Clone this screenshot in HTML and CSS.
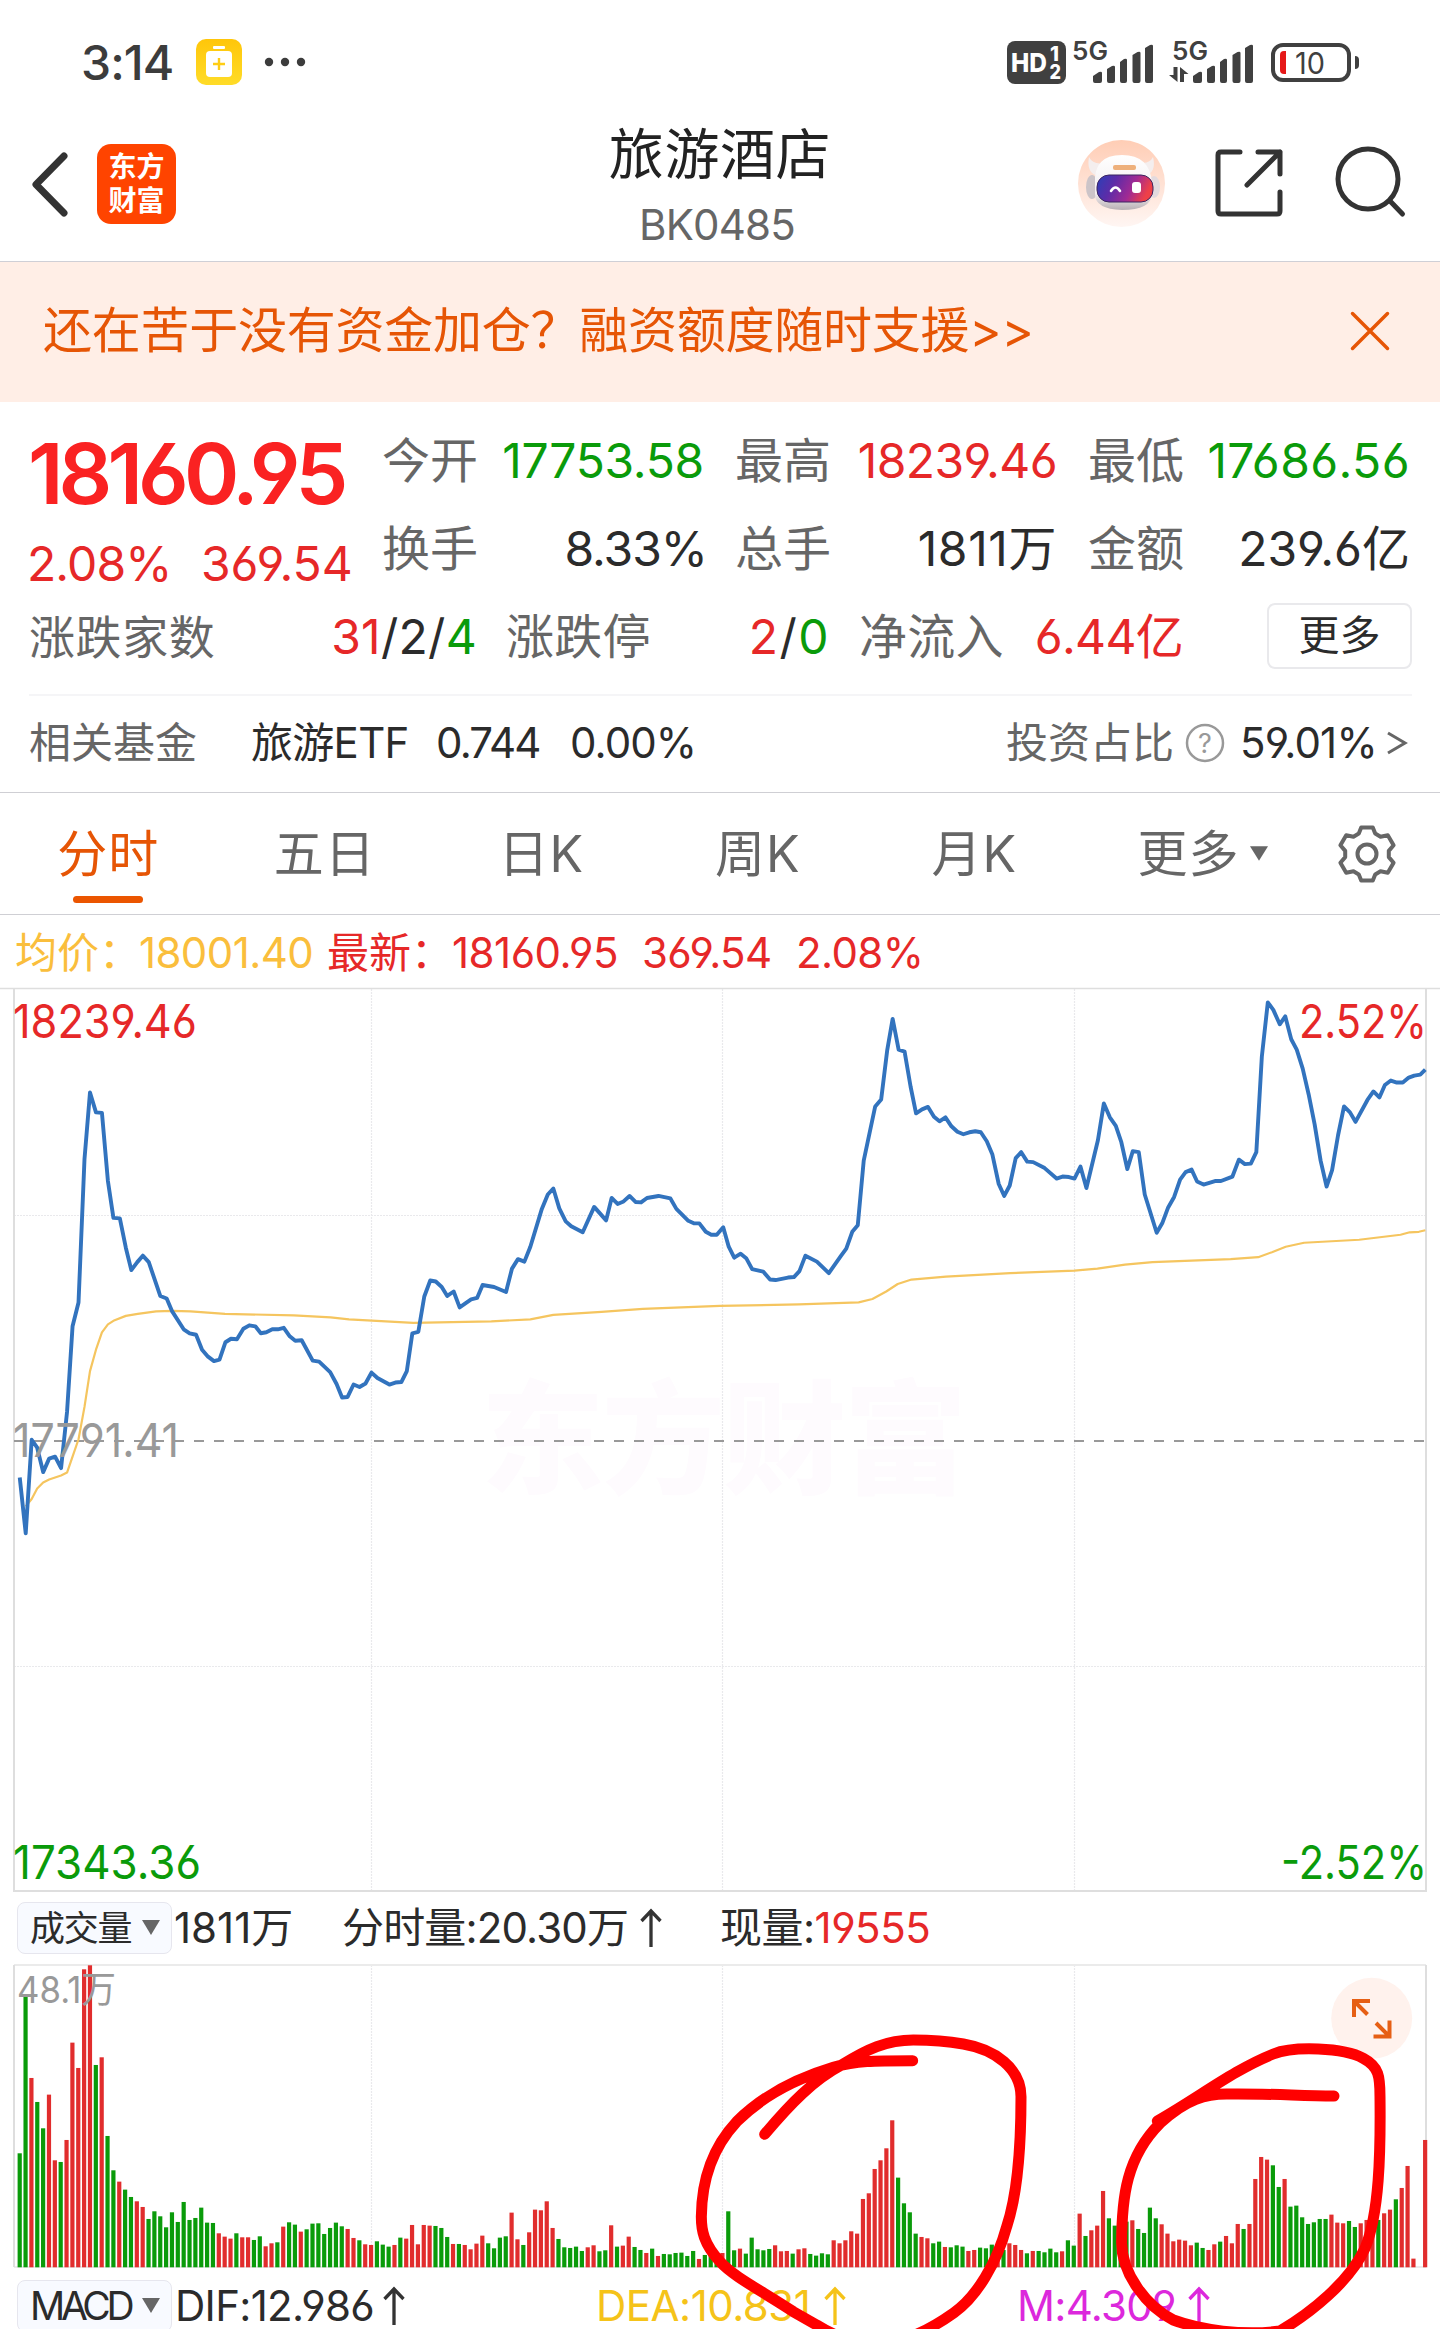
FILE: index.html
```html
<!DOCTYPE html>
<html lang="zh-CN">
<head>
<meta charset="utf-8">
<title>旅游酒店 BK0485</title>
<link rel="stylesheet" href="styles.css">
</head>
<body>
<header class="status">
  <span class="clock">3:14</span>
  <svg class="saver" width="46" height="46" viewBox="0 0 46 46"><defs><linearGradient id="sv" x2="0" y2="1"><stop offset="0" stop-color="#ffc60a"/><stop offset="1" stop-color="#ffdc28"/></linearGradient></defs><rect width="46" height="46" rx="10" fill="url(#sv)"/><rect x="17" y="7" width="12" height="3" rx="1" fill="#fff"/><rect x="10" y="12" width="26" height="26" rx="4" fill="#fff"/><path d="M23 19v12M17 25h12" stroke="#ffcd14" stroke-width="2.4"/></svg>
  <svg class="dots" width="44" height="10" viewBox="0 0 44 10" fill="#3c3c3c"><circle cx="5" cy="5" r="4.2"/><circle cx="21" cy="5" r="4.2"/><circle cx="37" cy="5" r="4.2"/></svg>
  <svg class="signals" width="356" height="46" viewBox="1006 38 356 46" fill="#404040">
    <rect x="1007" y="40" width="59" height="43" rx="8"/>
    <g fill="#fff" class="hd"><text x="1011" y="71" font-size="26" textLength="36" lengthAdjust="spacingAndGlyphs">HD</text><text x="1050" y="60" font-size="20" textLength="9" lengthAdjust="spacingAndGlyphs">1</text><text x="1049.500" y="78" font-size="20" textLength="11.500" lengthAdjust="spacingAndGlyphs">2</text></g>
    <text class="net" x="1072" y="59" textLength="36" lengthAdjust="spacingAndGlyphs">5G</text>
    <text class="net" x="1172" y="59" textLength="36" lengthAdjust="spacingAndGlyphs">5G</text>
    <g id="bars"><path d="M1093 75l6-4q3-1 3 1v8q0 2-2 2h-5q-2 0-2-2zM1107 68l5-3q3-1 3 1v14q0 2-2 2h-4q-2 0-2-2zM1120 61l4-3q3-1 3 1v21q0 2-2 2h-3q-2 0-2-2zM1132.500 54l5-3q3-1 3 1v28q0 2-2 2h-4q-2 0-2-2zM1145 47l5-3q3-1 3 1v35q0 2-2 2h-4q-2 0-2-2z"/></g>
    <use href="#bars" x="100"/>
    <path d="M1173.500 66h4v15l-8.500-7h4.500zM1180 81h4v-8h4.500l-8.500-7z"/>
    <rect x="1273" y="44" width="76" height="35" rx="10" fill="none" stroke="#404040" stroke-width="4"/>
    <path d="M1355 55q4 0 4 4v5q0 4-4 4z"/>
    <path d="M1286 50v23h-2q-4 0-4-4v-15q0-4 4-4z" fill="#e61919"/>
    <text x="1295" y="73" font-size="30" textLength="30" lengthAdjust="spacingAndGlyphs">10</text>
  </svg>
</header>

<nav class="nav">
  <div class="nav-left">
    <svg width="38" height="66" viewBox="0 0 38 66" fill="none" stroke="#333" stroke-width="7" stroke-linecap="round" stroke-linejoin="round"><path d="M33 5L5 33.500L33 62"/></svg>
    <div class="logo"><span>东方</span><span>财富</span></div>
  </div>
  <div class="nav-title"><h1>旅游酒店</h1><p>BK0485</p></div>
  <div class="nav-right">
    <svg class="avatar" width="87" height="87" viewBox="0 0 87 87">
      <defs>
        <linearGradient id="av" x2="0" y2="1"><stop offset="0" stop-color="#ffcdb5"/><stop offset="1" stop-color="#fff6f3"/></linearGradient>
        <linearGradient id="vz" y2=".25"><stop offset="0" stop-color="#2a40b8"/><stop offset=".35" stop-color="#5c2ca8"/><stop offset=".7" stop-color="#a02a94"/><stop offset="1" stop-color="#ee4048"/></linearGradient>
        <linearGradient id="hl" x2="0" y2="1"><stop offset="0" stop-color="#fff"/><stop offset=".7" stop-color="#f3eef0"/><stop offset="1" stop-color="#b8b0b4"/></linearGradient>
      </defs>
      <circle cx="43.500" cy="43.500" r="43.500" fill="url(#av)"/>
      <path d="M20 36Q8 33 11 17Q15 25 26 23zM66 36Q79 33 75 17Q71 25 60 22z" fill="#f4eeee"/>
      <ellipse cx="14" cy="47" rx="6" ry="12" fill="#ccc4c8"/><ellipse cx="76" cy="47" rx="6" ry="11" fill="#e2dade"/>
      <path d="M17 44Q15 15 44 15Q72 15 74 43L74 54Q73 70 44 70Q17 69 17 54z" fill="url(#hl)"/>
      <rect x="19" y="35" width="56" height="27" rx="12" fill="url(#vz)" stroke="#3b2460" stroke-width="1"/>
      <rect x="35" y="25" width="23" height="5" rx="2" fill="#eeb07c"/>
      <path d="M33 51q4.500-7 9 0" fill="none" stroke="#fff" stroke-width="2.600" stroke-linecap="round"/>
      <rect x="54" y="42" width="9" height="11" rx="3" fill="#fff"/>
    </svg>
    <svg class="share" width="68" height="68" viewBox="0 0 68 68" fill="none" stroke="#333" stroke-width="5" stroke-linecap="round" stroke-linejoin="round"><path d="M25 3H6Q3 3 3 6V62Q3 65 6 65H62Q65 65 65 62V43M43 3H65V25M65 3L32 36"/></svg>
    <svg class="search" width="72" height="72" viewBox="0 0 72 72" fill="none" stroke="#333" stroke-width="5" stroke-linecap="round"><circle cx="33" cy="32" r="30"/><path d="M55 54L67.500 67"/></svg>
  </div>
</nav>

<div class="banner">
  <span>还在苦于没有资金加仓？融资额度随时支援&gt;&gt;</span>
  <svg width="40" height="40" viewBox="0 0 40 40" stroke="#e65505" stroke-width="3.500" stroke-linecap="round"><path d="M2.500 2.500L37.500 37.500M37.500 2.500L2.500 37.500"/></svg>
</div>

<section class="quote">
  <div class="quote-top">
    <div class="price">
      <strong>18160.95</strong>
      <p><span class="pct">2.08%</span><span class="chg">369.54</span></p>
    </div>
    <dl class="stats">
      <div><dt>今开</dt><dd class="down v1">17753.58</dd></div>
      <div><dt>最高</dt><dd class="up v2">18239.46</dd></div>
      <div><dt>最低</dt><dd class="down v6">17686.56</dd></div>
      <div><dt>换手</dt><dd class="v3">8.33%</dd></div>
      <div><dt>总手</dt><dd class="v4">1811万</dd></div>
      <div><dt>金额</dt><dd>239.6亿</dd></div>
    </dl>
  </div>
  <dl class="quote-more">
    <div class="breadth"><dt class="tight">涨跌家数</dt><dd class="v5"><span class="up">31</span>/2/<span class="down">4</span></dd></div>
    <div><dt class="loose">涨跌停</dt><dd class="v7"><span class="up">2</span>/<span class="down">0</span></dd></div>
    <div><dt class="loose">净流入</dt><dd class="up v8">6.44亿</dd></div>
    <button class="more">更多</button>
  </dl>
  <div class="fund">
    <span class="muted">相关基金</span>
    <span class="f1">旅游ETF</span><span class="f2">0.744</span><span class="f3">0.00%</span>
    <span class="muted ratio">投资占比</span>
    <svg width="40" height="40" viewBox="0 0 40 40"><circle cx="20" cy="20" r="18" fill="none" stroke="#999" stroke-width="2.500"/><text x="20" y="29.500" text-anchor="middle" font-size="27" fill="#999">?</text></svg>
    <span class="f4">59.01%</span>
    <svg class="go" width="20" height="24" viewBox="0 0 20 24" fill="none" stroke="#666" stroke-width="3"><path d="M1 2L18 12L1 22"/></svg>
  </div>
</section>

<div class="tabs">
  <a class="on">分时</a><a>五日</a><a>日K</a><a>周K</a><a>月K</a>
  <a class="drop">更多<svg width="18" height="15" viewBox="0 0 20 16"><path d="M0 0H20L10 16z" fill="#666"/></svg></a>
  <a><svg width="60" height="60" viewBox="-30 -30 60 60" fill="none" stroke="#666" stroke-width="4" stroke-linejoin="round"><path d="M-5.800-26.500H5.800L8.200-20.400L13.500-17.300L20.800-18.700L26.600-8.700L21.800-3.100V3.100L26.600 8.700L20.800 18.700L13.500 17.300L8.200 20.400L5.800 26.500H-5.800L-8.200 20.400L-13.500 17.300L-20.800 18.700L-26.600 8.700L-21.800 3.100V-3.100L-26.600-8.700L-20.800-18.700L-13.500-17.300L-8.200-20.400z"/><circle r="9.500"/></svg></a>
</div>

<div class="info">
  <span class="avg">均价：</span><span class="avg i1">18001.40</span>
  <span class="up">最新：</span><span class="up i2">18160.95</span><span class="up i3">369.54</span><span class="up i1">2.08%</span>
</div>

<section class="chart">
  <svg class="trend" width="1440" height="904" viewBox="0 988 1440 904">
    <text class="watermark" x="481" y="1484" textLength="486" lengthAdjust="spacing">东方财富</text>
    <path d="M14 1215.500H1426M14 1666.500H1426M371.500 989V1891M722.500 989V1891M1074.500 989V1891" class="grid"/>
    <path d="M0 988.500H1440" class="frame thin"/>
    <path d="M14 988V1891H1426V988" class="frame"/>
    <path d="M14 1441H1426" class="mid"/>
    <svg x="0" y="988" width="1440" height="904" viewBox="0 418 3136 1817" preserveAspectRatio="none">
      <polyline class="avg-line" points="56,1460 69,1445 81,1424 94,1412 107,1406 133,1398 146,1392 158,1360 171,1325 184,1260 196,1188 209,1145 222,1110 235,1094 247,1087 274,1077 300,1073 340,1068 375,1067 415,1068 490,1073 640,1076 720,1080 760,1084 900,1091 1070,1088 1155,1084 1205,1075 1310,1069 1400,1063 1568,1057 1740,1054 1870,1050 1900,1043 1930,1028 1955,1013 1985,1004 2060,998 2200,991 2340,986 2390,982 2450,974 2510,969 2680,963 2740,959 2770,949 2800,938 2840,930 2960,924 3050,914 3070,909 3090,908 3104,905"/>
      <polyline class="price-line" points="43,1402 56,1514 69,1326 81,1342 94,1391 107,1364 120,1360 133,1383 146,1270 158,1098 171,1050 184,762 196,628 209,668 222,669 235,806 247,880 261,881 274,940 286,985 299,969 311,956 324,969 349,1037 363,1042 375,1068 400,1104 413,1112 427,1115 440,1145 453,1159 466,1168 478,1165 491,1130 503,1123 516,1124 530,1103 543,1096 556,1098 568,1112 580,1110 593,1104 605,1104 618,1101 631,1118 643,1127 657,1126 681,1167 695,1169 719,1190 733,1214 745,1241 757,1240 770,1215 783,1220 796,1213 809,1191 822,1202 848,1215 861,1211 874,1210 886,1188 898,1112 911,1109 924,1038 937,1006 949,1008 962,1019 974,1037 988,1028 1001,1060 1026,1044 1039,1041 1051,1015 1076,1019 1102,1029 1115,982 1128,963 1142,968 1155,938 1180,862 1193,833 1205,821 1218,861 1232,887 1244,897 1269,909 1294,858 1320,885 1332,840 1345,852 1358,847 1371,836 1384,848 1396,849 1409,840 1434,836 1460,841 1473,862 1499,886 1511,891 1523,891 1537,908 1549,914 1561,914 1575,899 1587,938 1599,960 1613,952 1625,961 1638,983 1662,988 1677,1004 1689,1005 1716,1000 1729,999 1741,987 1754,956 1779,968 1805,991 1831,957 1843,942 1856,908 1868,895 1881,765 1906,656 1919,642 1932,544 1944,480 1957,542 1970,546 1983,616 1995,670 2008,662 2021,657 2034,677 2046,686 2059,678 2072,696 2085,707 2098,712 2111,708 2124,706 2136,708 2149,726 2161,752 2175,812 2187,836 2199,815 2212,760 2224,748 2237,767 2250,768 2275,780 2301,801 2314,797 2328,798 2340,801 2353,777 2366,820 2391,724 2404,650 2417,678 2430,695 2442,728 2455,782 2467,746 2480,748 2493,833 2519,910 2531,891 2544,859 2557,838 2570,803 2582,788 2595,783 2607,807 2621,813 2646,806 2659,806 2684,797 2698,763 2711,772 2724,771 2736,748 2748,556 2761,447 2773,462 2787,491 2799,475 2812,521 2824,542 2837,580 2850,632 2863,692 2876,765 2889,817 2901,784 2914,714 2927,656 2940,668 2952,687 2978,643 2991,626 3004,638 3016,613 3029,604 3042,608 3055,608 3068,598 3080,594 3093,592 3104,582"/>
    </svg>
    <g font-size="47">
      <text class="up" x="13" y="1038" textLength="184" lengthAdjust="spacingAndGlyphs">18239.46</text>
      <text class="up" x="1299" y="1038" textLength="128" lengthAdjust="spacingAndGlyphs">2.52%</text>
      <text class="gray" x="13" y="1457" textLength="166" lengthAdjust="spacingAndGlyphs">17791.41</text>
      <text class="down" x="13" y="1879" textLength="188" lengthAdjust="spacingAndGlyphs">17343.36</text>
      <text class="down" x="1281" y="1879" textLength="146" lengthAdjust="spacingAndGlyphs">-2.52%</text>
    </g>
  </svg>

  <div class="indicator">
    <button class="pill"><span>成交量</span><svg width="18" height="15" viewBox="0 0 18 15"><path d="M0 0H18L9 15z" fill="#666"/></svg></button>
    <span class="q1">1811万</span>
    <span class="q2">分时量:20.30万</span>
    <svg class="arrow" width="22" height="38" viewBox="0 0 22 38"><path d="M11 38V2M1.500 12L11 2L20.500 12"/></svg>
    <span class="q3">现量:<b>19555</b></span>
  </div>

  <svg class="volume" width="1440" height="303" viewBox="0 1965 1440 303">
    <path d="M371.500 1965V2267M722.500 1965V2267M1074.500 1965V2267" class="grid"/>
    <path d="M14 1965H1426M14 2267H1426" class="frame faint"/>
    <path d="M14 1965V2267M1426 1965V2267" class="frame"/>
    <g id="volume-bars"></g>
    <text class="gray" x="17" y="2003" font-size="37" textLength="99" lengthAdjust="spacingAndGlyphs">48.1万</text>
    <circle cx="1371.700" cy="2018.300" r="40.500" fill="#fff2ed"/>
    <path d="M1354 2017V2001H1370M1355 2002L1367.500 2014.500M1373.500 2036.500H1389.500V2020.500M1388.500 2035.500L1376 2023" fill="none" stroke="#e65f14" stroke-width="4"/>
  </svg>

  <div class="indicator macd">
    <button class="pill"><span class="m">MACD</span><svg width="18" height="15" viewBox="0 0 18 15"><path d="M0 0H18L9 15z" fill="#666"/></svg></button>
    <span class="m1">DIF:12.986</span><svg class="arrow" width="22" height="38" viewBox="0 0 22 38"><path d="M11 38V2M1.500 12L11 2L20.500 12"/></svg>
    <span class="m2">DEA:10.831</span><svg class="arrow yellow" width="22" height="38" viewBox="0 0 22 38"><path d="M11 38V2M1.500 12L11 2L20.500 12"/></svg>
    <span class="m3">M:4.309</span><svg class="arrow violet" width="22" height="38" viewBox="0 0 22 38"><path d="M11 38V2M1.500 12L11 2L20.500 12"/></svg>
  </div>

  <svg class="marks" width="1440" height="509" viewBox="0 0 4320 1527">
    <path d="M2294 943C2370 852 2440 780 2525 735C2600 688 2660 660 2740 660C2800 660 2850 665 2890 672C2985 688 3063 745 3063 830C3063 1000 3050 1130 3020 1220C2990 1330 2930 1430 2862 1478C2810 1515 2760 1545 2700 1560C2600 1580 2520 1560 2450 1515L2380 1475C2290 1415 2200 1370 2160 1325C2110 1270 2104 1230 2104 1190C2105 1080 2140 980 2210 905C2290 825 2390 775 2500 742C2570 722 2620 722 2738 722"/>
    <path d="M3472 903C3600 830 3700 750 3820 702C3880 678 4030 682 4090 715C4137 740 4140 770 4140 830C4142 1000 4138 1180 4095 1285C4050 1385 3930 1480 3840 1533C3730 1548 3600 1530 3520 1500C3440 1460 3365 1360 3365 1270C3365 1130 3380 1010 3480 910C3560 835 3620 822 3680 822C3780 820 3880 826 4002 828"/>
  </svg>
</section>
<script src="volume.js"></script>
</body>
</html>
```
FILE: styles.css
```css
* { box-sizing: border-box; margin: 0; padding: 0; }
body { width: 1440px; height: 2329px; overflow: hidden; background: #fff; color: #2b2b2b; font-family: Inter, "Noto Sans CJK SC", sans-serif; font-feature-settings: "cv03", "cv04"; }
button { font: inherit; color: inherit; }
svg { display: block; flex: none; overflow: visible; }
text { font-family: Inter, "Noto Sans CJK SC", sans-serif; }
.up { color: #e62828; fill: #e62828; }
.down { color: #0a9b0a; fill: #0a9b0a; }
.gray { fill: #999; }

.status { display: flex; align-items: center; height: 124px; padding-left: 81px; }
.clock { width: 115px; font-size: 48px; font-weight: 500; letter-spacing: -.9px; color: #3c3c3c; }
.dots { margin-left: 22px; }
.signals { margin-left: auto; margin-right: 78px; }
.hd { font-weight: 800; }
.net { font-size: 26px; font-weight: 600; }

.nav { display: grid; grid-template-columns: 1fr 240px 1fr; height: 138px; border-bottom: 1px solid #cfcfd6; }
.nav-left { display: flex; align-items: center; gap: 28px; height: 119px; padding-left: 31px; }
.logo { display: flex; flex-direction: column; justify-content: center; align-items: center; width: 79px; height: 80px; border-radius: 14px; background: #ff4400; color: #fff; font-size: 28px; line-height: 34px; font-weight: 700; }
.nav-title { text-align: center; padding-top: 1px; }
.nav-title h1 { font-size: 55px; line-height: 58px; font-weight: 400; letter-spacing: .6px; color: #222; }
.nav-title p { margin-top: 13px; font-size: 42px; line-height: 58px; letter-spacing: -.8px; color: #666; padding-right: 6px; }
.nav-right { display: flex; align-items: center; justify-content: flex-end; height: 118px; padding-right: 33px; }
.share { margin-left: 50px; }
.search { margin-left: 52px; }

.banner { display: flex; align-items: center; justify-content: space-between; height: 140px; padding: 0 50px 2px 43px; background: #ffeee6; color: #e65505; font-size: 49px; line-height: 60px; letter-spacing: -.25px; }

.quote { height: 391px; padding: 15px 28px 0 29px; border-bottom: 1px solid #cfcfd4; font-size: 48px; }
.quote-top { display: flex; height: 176px; }
.price { width: 353px; color: #e62828; }
.price strong { display: block; font-size: 84px; line-height: 113px; font-weight: 600; letter-spacing: -4.900px; color: #fa2222; margin-left: -1px; }
.price p { display: flex; line-height: 68px; margin-left: -2px; }
.pct { width: 174px; letter-spacing: -.9px; }
.chg { letter-spacing: -.1px; }
.stats { display: grid; grid-template-columns: repeat(3, 322px); column-gap: 31px; grid-auto-rows: 88px; }
.stats div, .quote-more div { display: flex; justify-content: space-between; line-height: 88px; }
dt, .muted { color: #666; }
.v1 { letter-spacing: -.3px; }
.v2 { letter-spacing: -.6px; }
.v3 { letter-spacing: -1px; margin-right: -3px; }
.v4 { letter-spacing: .6px; }
.v5 { letter-spacing: .3px; }
.v6 { letter-spacing: .4px; }
.v7 { letter-spacing: 1.500px; }
.v8 { letter-spacing: -.7px; }
.quote-more { display: flex; gap: 30px; height: 103px; border-bottom: 2px solid #f5f5f7; }
.quote-more div { width: 323px; }
.quote-more .breadth { width: 448px; }
.tight { font-size: 46px; letter-spacing: .6px; }
.loose { letter-spacing: .2px; margin-left: -1px; }
.more { width: 145px; height: 66px; margin: 10px 0 0 auto; padding-bottom: 2px; border: 2px solid #e9e9ec; border-radius: 8px; background: #fff; font-size: 41px; line-height: 60px; }
.fund { display: flex; align-items: center; height: 94px; font-size: 42px; line-height: 50px; }
.f1 { width: 185px; margin-left: 54px; letter-spacing: -.7px; }
.f2 { width: 134px; letter-spacing: -1.8px; }
.f3 { letter-spacing: -.9px; }
.ratio { margin-left: auto; margin-right: 11px; }
.f4 { width: 147px; margin-left: 15px; letter-spacing: -.8px; }
.go { margin-right: 5px; }

.tabs { display: grid; grid-template-columns: repeat(5, 216.500px) 240px 88px; height: 122px; border-bottom: 1px solid #cfcfd4; font-size: 50px; line-height: 60px; color: #666; }
.tabs a { display: flex; align-items: center; justify-content: center; letter-spacing: 1px; }
.tabs .on { flex-direction: column; color: #e65505; }
.tabs .on::before { content: ""; height: 19px; }
.tabs .on::after { content: ""; width: 70px; height: 7px; margin-top: 12px; border-radius: 4px; background: #eb5500; }
.drop { gap: 10px; }

.info { display: grid; grid-template-columns: 124px 188px 125px 190px 154px auto; align-items: center; height: 73px; padding: 2px 0 0 15px; font-size: 42px; line-height: 50px; white-space: nowrap; }
.avg { color: #fabe3c; }
.i1 { letter-spacing: -.6px; }
.i2 { letter-spacing: -.5px; }
.i3 { letter-spacing: -.6px; }

.chart { position: relative; }
.grid { fill: none; stroke: #e9e9ec; stroke-width: 1.200; stroke-dasharray: 2 1; }
.frame { fill: none; stroke: #dedede; stroke-width: 2; }
.thin { stroke-width: 1.500; }
.faint { stroke: #ebebeb; }
.mid { stroke: #999; stroke-width: 2; stroke-dasharray: 10 10; }
.watermark { font-size: 123px; font-weight: 900; fill: #fefbfe; }
.price-line, .avg-line { fill: none; vector-effect: non-scaling-stroke; stroke-linejoin: round; }
.price-line { stroke: #3273be; stroke-width: 3.900; }
.avg-line { stroke: #f5c55f; stroke-width: 2.200; }

.indicator { display: flex; align-items: center; height: 73px; padding: 0 0 2px 17px; font-size: 42px; line-height: 50px; white-space: nowrap; }
.pill { display: flex; align-items: center; width: 155px; height: 52px; padding-left: 12px; border: 1.500px solid #e6e6ee; border-radius: 8px; background: #f8faff; }
.pill span { width: 112px; text-align: left; font-size: 35px; letter-spacing: -1.2px; }
.pill .m { font-size: 39px; letter-spacing: -4.300px; }
.q1 { width: 168px; margin-left: 2px; }
.q2 { width: 298px; letter-spacing: -.84px; }
.q3 { margin-left: 58px; letter-spacing: -.5px; }
.q3 b { font-weight: 400; color: #e62828; }
.arrow path { fill: none; stroke: #333; stroke-width: 3.300; }
.macd { height: 76px; padding-bottom: 1px; }
.m1 { width: 208px; margin-left: 3px; letter-spacing: -.7px; }
.m2 { width: 228px; margin-left: 191px; letter-spacing: -.5px; color: #f5c319; }
.m3 { width: 171px; margin-left: 171px; letter-spacing: -.7px; color: #dc28dc; }
.yellow path { stroke: #f5c319; }
.violet path { stroke: #dc28dc; }

.marks { position: absolute; left: 0; top: 832px; fill: none; stroke: #f00; stroke-width: 33; stroke-linecap: round; stroke-linejoin: round; pointer-events: none; }
.marks path { fill: none; }
```
FILE: volume.js
```js
// One entry per minute: bar height in thirds of a pixel, then r (up) or g (down).
const minutes = "342g 814g 568r 496g 417g 518r 321r 316g 382r 674r 598r 894r 906r 607g 630r 394g 291g 257r 233g 211g 198r 181r 145g 168g 153g 120g 165g 136g 196g 142g 148g 179g 134g 133g 102r 92r 86r 102g 90r 90r 82g 93g 63r 72r 75g 122r 135g 128g 107r 114g 131g 132g 100g 118g 134g 123g 115r 88r 81g 69r 67r 78g 68g 62g 67r 89g 86r 127r 69r 127r 125r 124g 118g 91g 70r 70g 67r 54r 71r 95r 72g 57g 89g 93g 164r 84r 67g 105r 173r 171r 198r 118r 85g 60g 58g 62g 49g 60r 66r 48g 51g 126r 62g 65r 92r 61g 52g 43r 56g 34r 40g 39g 43g 44g 34g 49g 25r 37g 37g 32g 43r 168g 51g 56r 41g 89g 54g 51g 55g 66r 48r 49r 41g 54r 57r 40g 35g 42g 39g 81r 72r 81r 108r 101r 205r 222r 295r 321r 357r 441r 269g 192g 165g 101g 91r 87r 72g 77g 61r 60g 66g 62g 49r 52r 59g 57g 68g 62r 52g 72r 67r 52r 42g 49r 49g 45g 56g 45g 48r 81g 65g 161r 94g 111r 125r 229r 147g 125g 132g 137g 141r 115g 103g 179g 147g 129r 101r 78r 83r 80r 66r 74g 58g 52r 69r 77g 94r 72r 130r 115g 130r 265r 331r 323r 306g 241g 265r 182g 185g 150g 130g 135g 145g 145g 158r 134r 132r 139g 121g 132r 142r 142r 142g 162r 173r 204g 238r 304r 26r 0r 382r".split(" ");
const base = 2267.3;
const group = document.getElementById("volume-bars");
minutes.forEach((entry, i) => {
  const bar = document.createElementNS("http://www.w3.org/2000/svg", "rect");
  const height = parseInt(entry, 10) / 3;
  bar.setAttribute("x", (17.6 + i * 5.856).toFixed(2));
  bar.setAttribute("y", (base - height).toFixed(2));
  bar.setAttribute("width", 4.2);
  bar.setAttribute("height", height.toFixed(2));
  bar.setAttribute("fill", entry.endsWith("g") ? "#0a9b0a" : "#e12d2d");
  group.append(bar);
});
```
